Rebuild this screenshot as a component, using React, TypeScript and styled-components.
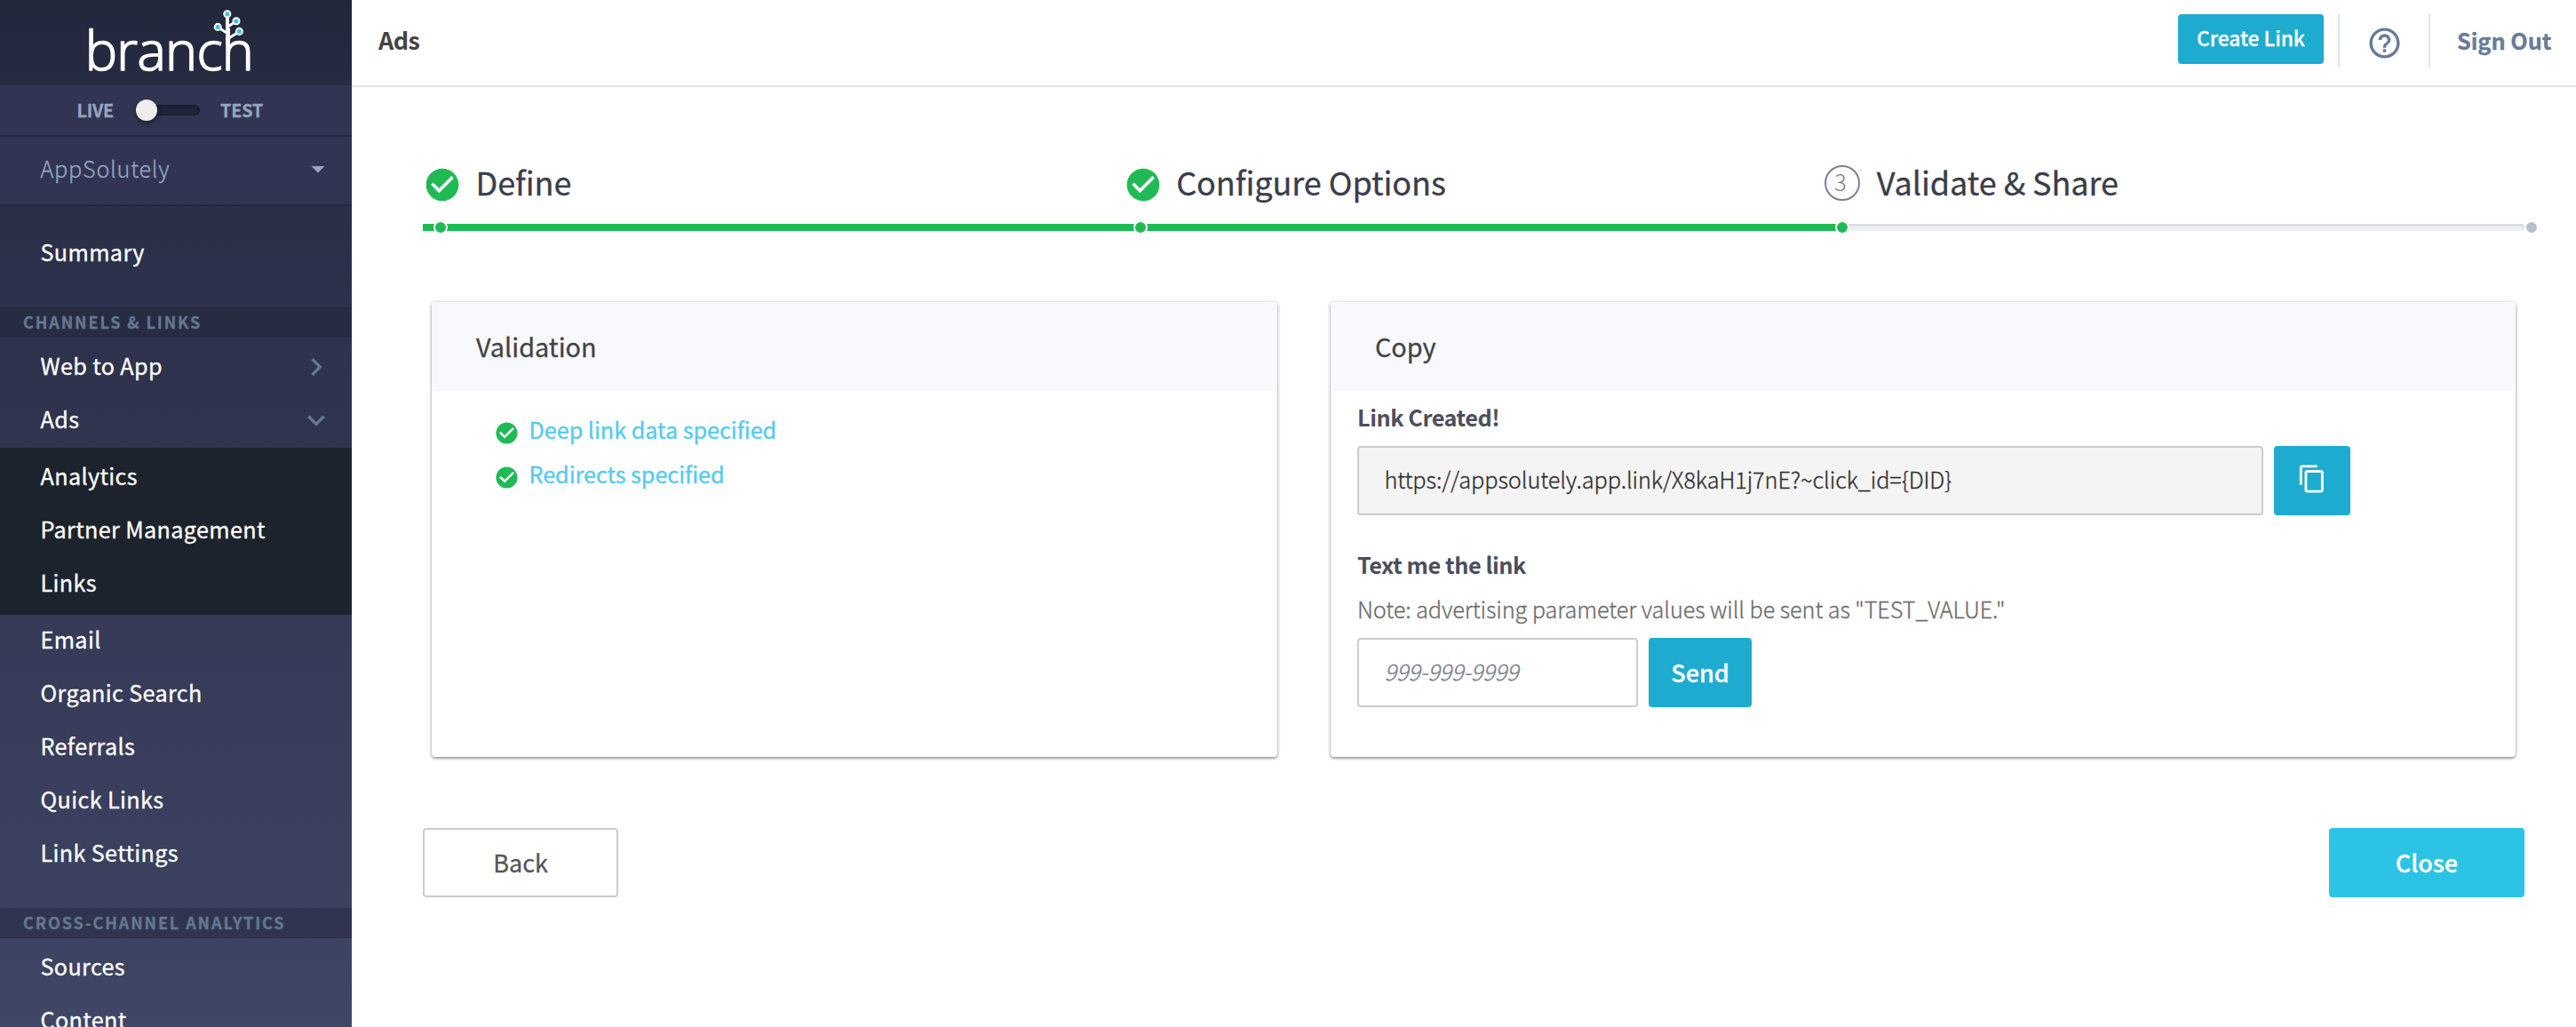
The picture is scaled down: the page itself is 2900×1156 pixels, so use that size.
import React from 'react';
import styled, { createGlobalStyle, css } from 'styled-components';
import {
  MdArrowDropDown,
  MdCheckCircle,
  MdChevronRight,
  MdContentCopy,
  MdExpandMore,
  MdHelpOutline,
} from 'react-icons/md';

const color = {
  green: '#20ba55',
  teal: '#1dacd0',
  aqua: '#2dc3e5',
  slate: '#677b98',
  muted: '#64788f',
  border: '#cccccc',
};

const GlobalStyle = createGlobalStyle`
  *, *::before, *::after { box-sizing: border-box; }
  body {
    margin: 0;
    background: #fff;
    overflow: hidden;
    font-family: "Noto Sans CJK SC", "Open Sans", sans-serif;
    font-size: 25.2px;
    color: #434343;
    -webkit-text-stroke: 0.3px;
  }
  svg { display: block; flex: none; }
`;

const Page = styled.div`
  display: flex;
  width: 2900px;
  height: 1156px;
  overflow: hidden;
`;

/* ---------- sidebar ---------- */

const Sidebar = styled.nav`
  flex: none;
  width: 396px;
  height: 1156px;
  overflow: hidden;
  background: linear-gradient(#23273c 0%, #272b42 8.5%, #2b2f48 21%, #30344f 43%, #363a57 60%, #3c4160 87%, #404666 100%);
`;

const LogoBox = styled.div`
  height: 96px;
`;

const ModeBar = styled.div`
  display: flex;
  align-items: center;
  height: 58px;
  padding-left: 86.5px;
  background: #313553;
  border-bottom: 2px solid #25283f;
`;

const ModeLabel = styled.span`
  font-size: 19.8px;
  font-weight: 700;
  line-height: 28px;
  letter-spacing: -0.2px;
  color: #95a6bd;
`;

const Switch = styled.div`
  width: 72px;
  height: 12px;
  margin: 0 23.5px 0 24.5px;
  border-radius: 6px;
  background: #222539;
  box-shadow: inset 0 1px 4px rgba(0, 0, 0, 0.45);
  display: flex;
  align-items: center;
`;

const Knob = styled.div`
  width: 24px;
  height: 24px;
  border-radius: 50%;
  background: #eeeeee;
  box-shadow: 0 3px 5px rgba(0, 0, 0, 0.4);
`;

const AppPicker = styled.div`
  display: flex;
  align-items: center;
  justify-content: space-between;
  height: 78px;
  padding: 0 20px 6px 45.5px;
  background: #313553;
  border-bottom: 2px solid #25283f;
  font-weight: 300;
  letter-spacing: 0.75px;
  color: #95a6c0;

  svg { position: relative; top: 1px; }
`;

const NavGroup = styled.div<{ $top?: number; $bottom?: number; $dark?: boolean }>`
  padding-top: ${(p) => p.$top ?? 0}px;
  padding-bottom: ${(p) => p.$bottom ?? 0}px;
  ${(p) =>
    p.$dark &&
    css`
      background: #1d232c;
    `}
`;

const NavItem = styled.a<{ $tight?: boolean }>`
  display: flex;
  align-items: center;
  justify-content: space-between;
  height: ${(p) => (p.$tight ? 56 : 60)}px;
  padding: ${(p) => (p.$tight ? '0 20px 2px 45.5px' : '2px 20px 0 45.5px')};
  letter-spacing: 0.35px;
  color: #fff;

  svg { color: ${color.muted}; position: relative; top: 2px; }
`;

const NavHeading = styled.div<{ $bg: string }>`
  height: 34px;
  padding-left: 26px;
  background: ${(p) => p.$bg};
  font-size: 18px;
  font-weight: 700;
  line-height: 33px;
  letter-spacing: 1.9px;
  color: ${color.muted};
`;

/* ---------- top bar ---------- */

const Content = styled.div`
  flex: 1;
  min-width: 0;
`;

const TopBar = styled.header`
  display: flex;
  justify-content: space-between;
  height: 98px;
  padding-left: 30px;
  border-bottom: 2px solid #e0e5ea;
`;

const PageTitle = styled.h1`
  margin: 0;
  font-size: 27px;
  font-weight: 700;
  line-height: 90px;
  letter-spacing: -0.6px;
  -webkit-text-stroke: 0;
`;

const TopActions = styled.div`
  display: flex;
  padding-top: 16px;
`;

const CreateLink = styled.button`
  width: 164px;
  height: 56px;
  margin-right: 16px;
  padding: 0 0 4px;
  border: 0;
  border-radius: 4px;
  background: ${color.teal};
  color: #fff;
  font: 500 22.7px "Noto Sans CJK SC", sans-serif;
`;

const HelpCell = styled.div`
  display: flex;
  align-items: center;
  justify-content: center;
  width: 104px;
  height: 60px;
  padding-top: 4px;
  border-left: 2px solid #e0e5ea;
  border-right: 2px solid #e0e5ea;
  color: ${color.slate};
`;

const SignOut = styled.a`
  width: 164px;
  padding-left: 30px;
  font-weight: 700;
  line-height: 58px;
  color: ${color.slate};
`;

/* ---------- wizard steps ---------- */

const Main = styled.main`
  padding: 88px 58px 0 80px;
`;

const Steps = styled.div`
  display: grid;
  grid-template-columns: repeat(3, 1fr);
  height: 66px;
`;

const Step = styled.div`
  display: flex;
  align-items: flex-start;
  color: #3b3d49;

  svg { color: ${color.green}; }
`;

const StepTitle = styled.h2`
  margin: 0 0 0 15.5px;
  font-size: 36px;
  font-weight: 400;
  line-height: 37px;
  letter-spacing: -0.05px;
`;

const StepNumber = styled.span`
  width: 40px;
  height: 40px;
  margin: 0 3.5px 0 0.5px;
  padding-right: 4px;
  border: 2px solid #7b8093;
  border-radius: 50%;
  font-size: 26px;
  font-weight: 300;
  line-height: 32px;
  text-align: center;
  color: #7b8088;
  -webkit-text-stroke: 0;
`;

const Track = styled.div`
  position: relative;
  height: 8px;
  border-radius: 0 4px 4px 0;
  background: #eff1f4;
  box-shadow: inset 0 2px 3px rgba(0, 0, 0, 0.12);
`;

const TrackFill = styled.div`
  width: calc(66.667% + 14px);
  height: 8px;
  background: ${color.green};
`;

const TrackDot = styled.span<{ $left: string; $pending?: boolean }>`
  position: absolute;
  top: -4px;
  left: ${(p) => p.$left};
  width: 16px;
  height: 16px;
  border: 2px solid #fff;
  border-radius: 50%;
  background: ${(p) => (p.$pending ? '#b4c0cd' : color.green)};
  background-clip: padding-box;
  box-shadow: inset 0 0 0 6px ${(p) => (p.$pending ? '#b4c0cd' : color.green)};
`;

/* ---------- cards ---------- */

const Cards = styled.div`
  display: flex;
  gap: 60px;
  padding: 0 10px;
  margin-top: 80px;
`;

const Card = styled.section<{ $width: number }>`
  width: ${(p) => p.$width}px;
  height: 512px;
  border-radius: 4px;
  background: #fff;
  box-shadow: 0 0 4px rgba(0, 0, 0, 0.2), 0 2px 3px rgba(0, 0, 0, 0.32);
`;

const CardTitle = styled.h3`
  margin: 0;
  height: 100px;
  padding-left: 50px;
  border-radius: 4px 4px 0 0;
  background: #f8f9fd;
  font-size: 28.8px;
  font-weight: 400;
  line-height: 100px;
`;

const Checks = styled.ul`
  margin: 0;
  padding: 18px 0 0 69.5px;
  list-style: none;
`;

const Check = styled.li`
  display: flex;
  align-items: center;
  gap: 11px;
  height: 50px;
  letter-spacing: -0.03px;
  color: #52caf2;

  svg { color: ${color.green}; position: relative; top: 4.5px; }
`;

const CopyBody = styled.div`
  padding: 9px 30px 0;
`;

const Label = styled.div<{ $top?: number }>`
  margin-top: ${(p) => p.$top ?? 0}px;
  font-weight: 700;
  line-height: 40px;
  letter-spacing: -0.4px;
  color: #4c4e5c;
  -webkit-text-stroke: 0;
`;

const Note = styled.p`
  margin: 10px 0 0;
  font-weight: 300;
  line-height: 40px;
  letter-spacing: -0.05px;
  color: #6c6c6c;
`;

const FieldRow = styled.div`
  display: flex;
  gap: 12px;
  margin-top: 13px;
`;

const Field = styled.div<{ $width: number; $placeholder?: boolean }>`
  width: ${(p) => p.$width}px;
  height: 78px;
  padding-left: 28.5px;
  border: 2px solid ${color.border};
  border-radius: 4px;
  background: ${(p) => (p.$placeholder ? '#fff' : '#f4f4f4')};
  color: ${(p) => (p.$placeholder ? '#7c7f8b' : '#2e2e2e')};
  font-style: ${(p) => (p.$placeholder ? 'italic' : 'normal')};
  font-weight: 300;
  line-height: 70px;
  letter-spacing: -0.04px;
`;

const Button = styled.button<{ $width: number; $bg?: string }>`
  display: flex;
  align-items: center;
  justify-content: center;
  width: ${(p) => p.$width}px;
  height: 78px;
  padding: 0 0 2px;
  border: ${(p) => (p.$bg ? '0' : `2px solid ${color.border}`)};
  border-radius: 4px;
  background: ${(p) => p.$bg ?? '#fff'};
  color: ${(p) => (p.$bg ? '#fff' : '#555')};
  font: ${(p) => (p.$bg ? 500 : 400)} 27px "Noto Sans CJK SC", sans-serif;
`;

const CopyButton = styled(Button)`
  padding: 0 1px 4px 0;
`;

const Footer = styled.div`
  display: flex;
  justify-content: space-between;
  margin-top: 80px;
`;

/* ---------- logo ---------- */

const nodes = [
  { x: 255.8, y: 15.8 },
  { x: 266, y: 23.8 },
  { x: 245.2, y: 30.4 },
  { x: 269.4, y: 35.4 },
];

const Logo = () => (
  <svg width="396" height="96" viewBox="0 0 396 96">
    <text
      x="95.7"
      y="78.5"
      fill="#fff"
      stroke="#fff"
      strokeWidth="1.6"
      fontFamily="Open Sans, sans-serif"
      fontWeight="300"
      fontSize="61"
      letterSpacing="-0.65"
    >
      branch
    </text>
    <g stroke="#fff" strokeWidth="4" fill="none">
      <path d="M256 18V50" />
      <path d="M266 23.8L256 30.5M245.2 30.4L256 37.5M269.4 35.4L256 44" strokeWidth="3" />
    </g>
    {nodes.map((n) => (
      <circle key={n.x} cx={n.x} cy={n.y} r="3.6" fill="#40c4e8" stroke="#fff" strokeWidth="1.9" />
    ))}
  </svg>
);

export default function App() {
  return (
    <>
      <GlobalStyle />
      <Page>
        <Sidebar>
          <LogoBox>
            <Logo />
          </LogoBox>
          <ModeBar>
            <ModeLabel>LIVE</ModeLabel>
            <Switch>
              <Knob />
            </Switch>
            <ModeLabel>TEST</ModeLabel>
          </ModeBar>
          <AppPicker>
            AppSolutely
            <MdArrowDropDown size={36} />
          </AppPicker>
          <NavGroup $top={20} $bottom={34}>
            <NavItem>Summary</NavItem>
          </NavGroup>
          <NavHeading $bg="#282c43">CHANNELS &amp; LINKS</NavHeading>
          <NavGroup $bottom={4}>
            <NavItem>
              Web to App
              <MdChevronRight size={40} />
            </NavItem>
            <NavItem>
              Ads
              <MdExpandMore size={40} />
            </NavItem>
          </NavGroup>
          <NavGroup $bottom={8} $dark>
            <NavItem>Analytics</NavItem>
            <NavItem>Partner Management</NavItem>
            <NavItem>Links</NavItem>
          </NavGroup>
          <NavGroup $bottom={34}>
            <NavItem $tight>Email</NavItem>
            <NavItem>Organic Search</NavItem>
            <NavItem>Referrals</NavItem>
            <NavItem>Quick Links</NavItem>
            <NavItem>Link Settings</NavItem>
          </NavGroup>
          <NavHeading $bg="#30344f">CROSS-CHANNEL ANALYTICS</NavHeading>
          <NavGroup>
            <NavItem>Sources</NavItem>
            <NavItem>Content</NavItem>
          </NavGroup>
        </Sidebar>

        <Content>
          <TopBar>
            <PageTitle>Ads</PageTitle>
            <TopActions>
              <CreateLink>Create Link</CreateLink>
              <HelpCell>
                <MdHelpOutline size={41} />
              </HelpCell>
              <SignOut>Sign Out</SignOut>
            </TopActions>
          </TopBar>

          <Main>
            <Steps>
              <Step>
                <MdCheckCircle size={44} />
                <StepTitle>Define</StepTitle>
              </Step>
              <Step>
                <MdCheckCircle size={44} />
                <StepTitle>Configure Options</StepTitle>
              </Step>
              <Step>
                <StepNumber>3</StepNumber>
                <StepTitle>Validate &amp; Share</StepTitle>
              </Step>
            </Steps>
            <Track>
              <TrackFill />
              <TrackDot $left="12px" />
              <TrackDot $left="calc(33.333% + 11.5px)" />
              <TrackDot $left="calc(66.667% + 12.5px)" />
              <TrackDot $left="100%" $pending />
            </Track>

            <Cards>
              <Card $width={952}>
                <CardTitle>Validation</CardTitle>
                <Checks>
                  <Check>
                    <MdCheckCircle size={29} />
                    Deep link data specified
                  </Check>
                  <Check>
                    <MdCheckCircle size={29} />
                    Redirects specified
                  </Check>
                </Checks>
              </Card>
              <Card $width={1334}>
                <CardTitle>Copy</CardTitle>
                <CopyBody>
                  <Label>Link Created!</Label>
                  <FieldRow>
                    <Field $width={1020}>{'https://appsolutely.app.link/X8kaH1j7nE?~click_id={DID}'}</Field>
                    <CopyButton $width={86} $bg={color.teal} aria-label="Copy link">
                      <MdContentCopy size={34} />
                    </CopyButton>
                  </FieldRow>
                  <Label $top={35}>Text me the link</Label>
                  <Note>Note: advertising parameter values will be sent as "TEST_VALUE."</Note>
                  <FieldRow>
                    <Field $width={316} $placeholder>
                      999-999-9999
                    </Field>
                    <Button $width={116} $bg={color.teal}>
                      Send
                    </Button>
                  </FieldRow>
                </CopyBody>
              </Card>
            </Cards>

            <Footer>
              <Button $width={220}>Back</Button>
              <Button $width={220} $bg={color.aqua}>
                Close
              </Button>
            </Footer>
          </Main>
        </Content>
      </Page>
    </>
  );
}
